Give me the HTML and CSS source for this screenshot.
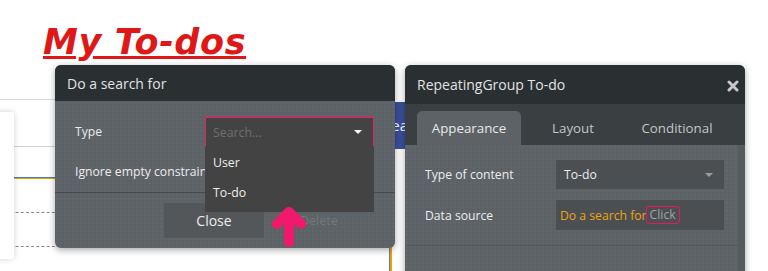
FILE: index.html
```html
<!DOCTYPE html>
<html lang="en">
<head>
  <meta charset="UTF-8" />
  <meta name="viewport" content="width=device-width, initial-scale=1.0"/>
  <title>My To-dos - editor</title>
  <link rel="stylesheet" href="styles.css">
</head>
<body>
<div class="stage">

  <!-- page underneath the popups -->
  <h1 class="page-title">My To-dos</h1>
  <div class="rule rule-top"></div>
  <div class="rule rule-grey"></div>
  <div class="rule rule-color"></div>
  <div class="rule rule-dash dash-1"></div>
  <div class="rule rule-dash dash-2"></div>
  <div class="side-card"></div>
  <div class="blue-btn">Search</div>
  <div class="v-line"></div>

  <!-- popup: search -->
  <div class="win win-search">
    <div class="win-head">Do a search for</div>
    <div class="form">
      <div class="field">
        <span class="field-label">Type</span>
        <div class="select open">
          <span class="placeholder">Search...</span>
          <span class="caret caret-white"></span>
          <ul class="options">
            <li>User</li>
            <li>To-do</li>
          </ul>
        </div>
      </div>
      <div class="field">
        <span class="field-label">Ignore empty constraints</span>
      </div>
    </div>
    <div class="win-foot">
      <button class="btn">Close</button>
      <button class="btn btn-ghost">Delete</button>
    </div>
  </div>

  <!-- popup: repeating group -->
  <div class="win win-rg">
    <div class="win-head">
      RepeatingGroup To-do
      <svg class="close-x" width="12" height="12" viewBox="0 0 12 12">
        <path d="M2 2 L10 10 M10 2 L2 10" stroke="#c9c9c9" stroke-width="3" stroke-linecap="round"/>
      </svg>
    </div>
    <div class="tabs">
      <div class="tab active">Appearance</div>
      <div class="tab">Layout</div>
      <div class="tab">Conditional</div>
    </div>
    <div class="rg-body">
      <div class="form rg-form">
        <div class="field">
          <span class="field-label">Type of content</span>
          <div class="box">
            <span>To-do</span>
            <span class="caret caret-grey"></span>
          </div>
        </div>
        <div class="field field-30">
          <span class="field-label">Data source</span>
          <div class="box">
            <span class="expr">Do a search for</span><span class="click">Click</span>
          </div>
        </div>
      </div>
      <div class="rg-rest"></div>
      <div class="scroll"></div>
    </div>
  </div>

  <svg class="pointer" width="40" height="46" viewBox="0 0 40 46">
    <path d="M17 38 L17 9 M5 20 L17 8 L29 20" stroke="#f1196b" stroke-width="10" stroke-linecap="round" stroke-linejoin="round" fill="none"/>
  </svg>
</div>
</body>
</html>
```

FILE: styles.css
```css
body {
  margin: 0;
  background: #fff;
  font-family: 'Open Sans', sans-serif;
  overflow: hidden;
}

.stage {
  position: relative;
  width: 768px;
  height: 271px;
  overflow: hidden;
}

/* ---- page behind ---- */
.page-title {
  position: absolute;
  left: 43px;
  top: 22px;
  margin: 0;
  font-family: 'DejaVu Sans', sans-serif;
  font-size: 35px;
  line-height: 40px;
  font-weight: bold;
  font-style: italic;
  letter-spacing: 0.6px;
  color: #df1717;
  text-decoration: underline;
  text-decoration-thickness: 3px;
  text-underline-offset: 2px;
}

.rule {
  position: absolute;
  left: 0;
  width: 60px;
  height: 0;
}
.rule-top { top: 99px; border-top: 1px solid #dcdcdc; }
.rule-grey { top: 146px; border-top: 1px solid #d4d4d4; }
.rule-color { top: 177px; border-top: 1px solid #3f7fd0; border-bottom: 1px solid #f0a000; }
.rule-dash { border-top: 1px dashed #8a8a8a; }
.dash-1 { top: 212px; }
.dash-2 { top: 246px; }

.side-card {
  position: absolute;
  left: -10px;
  top: 112px;
  width: 24px;
  height: 147px;
  background: #fff;
  border-radius: 3px;
  box-shadow: 0 0 6px rgba(0,0,0,0.18);
}

.blue-btn {
  position: absolute;
  left: 360px;
  top: 102px;
  width: 60px;
  height: 47px;
  background: #3d4f9e;
  color: #fff;
  font-size: 15px;
  line-height: 47px;
  padding-left: 23px;
  box-sizing: border-box;
}

.v-line {
  position: absolute;
  left: 389px;
  top: 246px;
  width: 2px;
  height: 30px;
  background: #f0a000;
  border-left: 1px solid #4a7fc8;
}

/* ---- popups ---- */
.win {
  position: absolute;
  background-color: #5d6266;
  background-image: radial-gradient(rgba(255,255,255,0.05) 0.6px, transparent 0.8px);
  background-size: 4px 4px;
  border-radius: 6px;
  box-shadow: 0 2px 7px rgba(0,0,0,0.35);
  color: #ececec;
}

.win-search {
  left: 55px;
  top: 65px;
  width: 340px;
  height: 183px;
}

.win-rg {
  left: 405px;
  top: 65px;
  width: 340px;
  height: 240px;
}

.win-head {
  position: relative;
  height: 36px;
  padding-left: 12px;
  display: flex;
  align-items: center;
  background: #2a2f32;
  border-radius: 6px 6px 0 0;
  font-size: 14px;
  color: #e2e2e2;
}
.win-rg .win-head { height: 39px; }

.close-x {
  position: absolute;
  right: 6px;
  top: 15px;
}

.form {
  padding: 16px 21px 6px 20px;
  display: flex;
  flex-direction: column;
  gap: 11px;
}

.field {
  display: flex;
  align-items: center;
  height: 29px;
}
.field-30 { height: 30px; }

.field-label {
  width: 130px;
  flex-shrink: 0;
  font-size: 12.2px;
  white-space: nowrap;
}

.select {
  position: relative;
  width: 169px;
  height: 29px;
  box-sizing: border-box;
  background: #434343;
  border: 1px solid #ec1f5f;
  border-bottom: none;
  box-shadow: 0 -1px 0 rgba(236, 31, 95, 0.35);
  padding-left: 7px;
  display: flex;
  align-items: center;
  font-size: 12.3px;
}
.placeholder { color: #6f6f6f; }

.caret {
  position: absolute;
  right: 11px;
  top: 12px;
  width: 0;
  height: 0;
  border-left: 4.5px solid transparent;
  border-right: 4.5px solid transparent;
}
.caret-white { border-top: 4.5px solid #fff; }
.caret-grey { border-top: 4.5px solid #9a9da0; top: 13px; right: 11px; }

.options {
  position: absolute;
  left: -1px;
  top: 28px;
  width: 169px;
  margin: 0;
  padding: 2px 0 4px;
  list-style: none;
  background: #434343;
  z-index: 3;
}
.options li {
  height: 30px;
  line-height: 30px;
  padding-left: 8px;
  color: #ededed;
}

.win-foot {
  border-top: 1px solid #45494c;
  padding: 10px 0 0 109px;
  display: flex;
  gap: 5px;
}

.btn {
  width: 100px;
  height: 35px;
  border: none;
  background: #53575a;
  color: #ededed;
  font-family: 'Open Sans', sans-serif;
  font-size: 14px;
}
.btn-ghost {
  width: auto;
  padding: 0 0 0 31px;
  background: transparent;
  color: #72777a;
  font-size: 12.5px;
}

/* tabs */
.tabs {
  height: 41px;
  box-sizing: border-box;
  padding: 7px 0 0 12px;
  background: #3a3f42;
  display: flex;
}
.tab {
  width: 104px;
  height: 34px;
  display: flex;
  align-items: center;
  justify-content: center;
  font-size: 13.3px;
  color: #c2c4c6;
}
.tab.active {
  background: #5d6266;
  border-radius: 5px 5px 0 0;
  color: #e8e8e8;
}

.rg-body { position: relative; }
.rg-form { padding: 15px 21px 15px 20px; }
.rg-form .field-label { width: 131px; }

.box {
  position: relative;
  width: 168px;
  height: 100%;
  background: #4b4f52;
  display: flex;
  align-items: center;
  padding-left: 8px;
  box-sizing: border-box;
  font-size: 12.2px;
}
.expr { color: #eba312; margin-left: -4px; }
.click {
  margin-left: -1px;
  padding: 0 3px;
  border: 1px solid #e8185f;
  border-radius: 3px;
  color: #a2a4a6;
  line-height: 16px;
}

.rg-rest {
  border-top: 1px solid #54595c;
  height: 40px;
}

.scroll {
  position: absolute;
  right: 0;
  top: 0;
  bottom: 0;
  width: 7px;
  background: #565b5e;
}

.pointer {
  position: absolute;
  left: 272px;
  top: 204px;
  z-index: 5;
}
```
